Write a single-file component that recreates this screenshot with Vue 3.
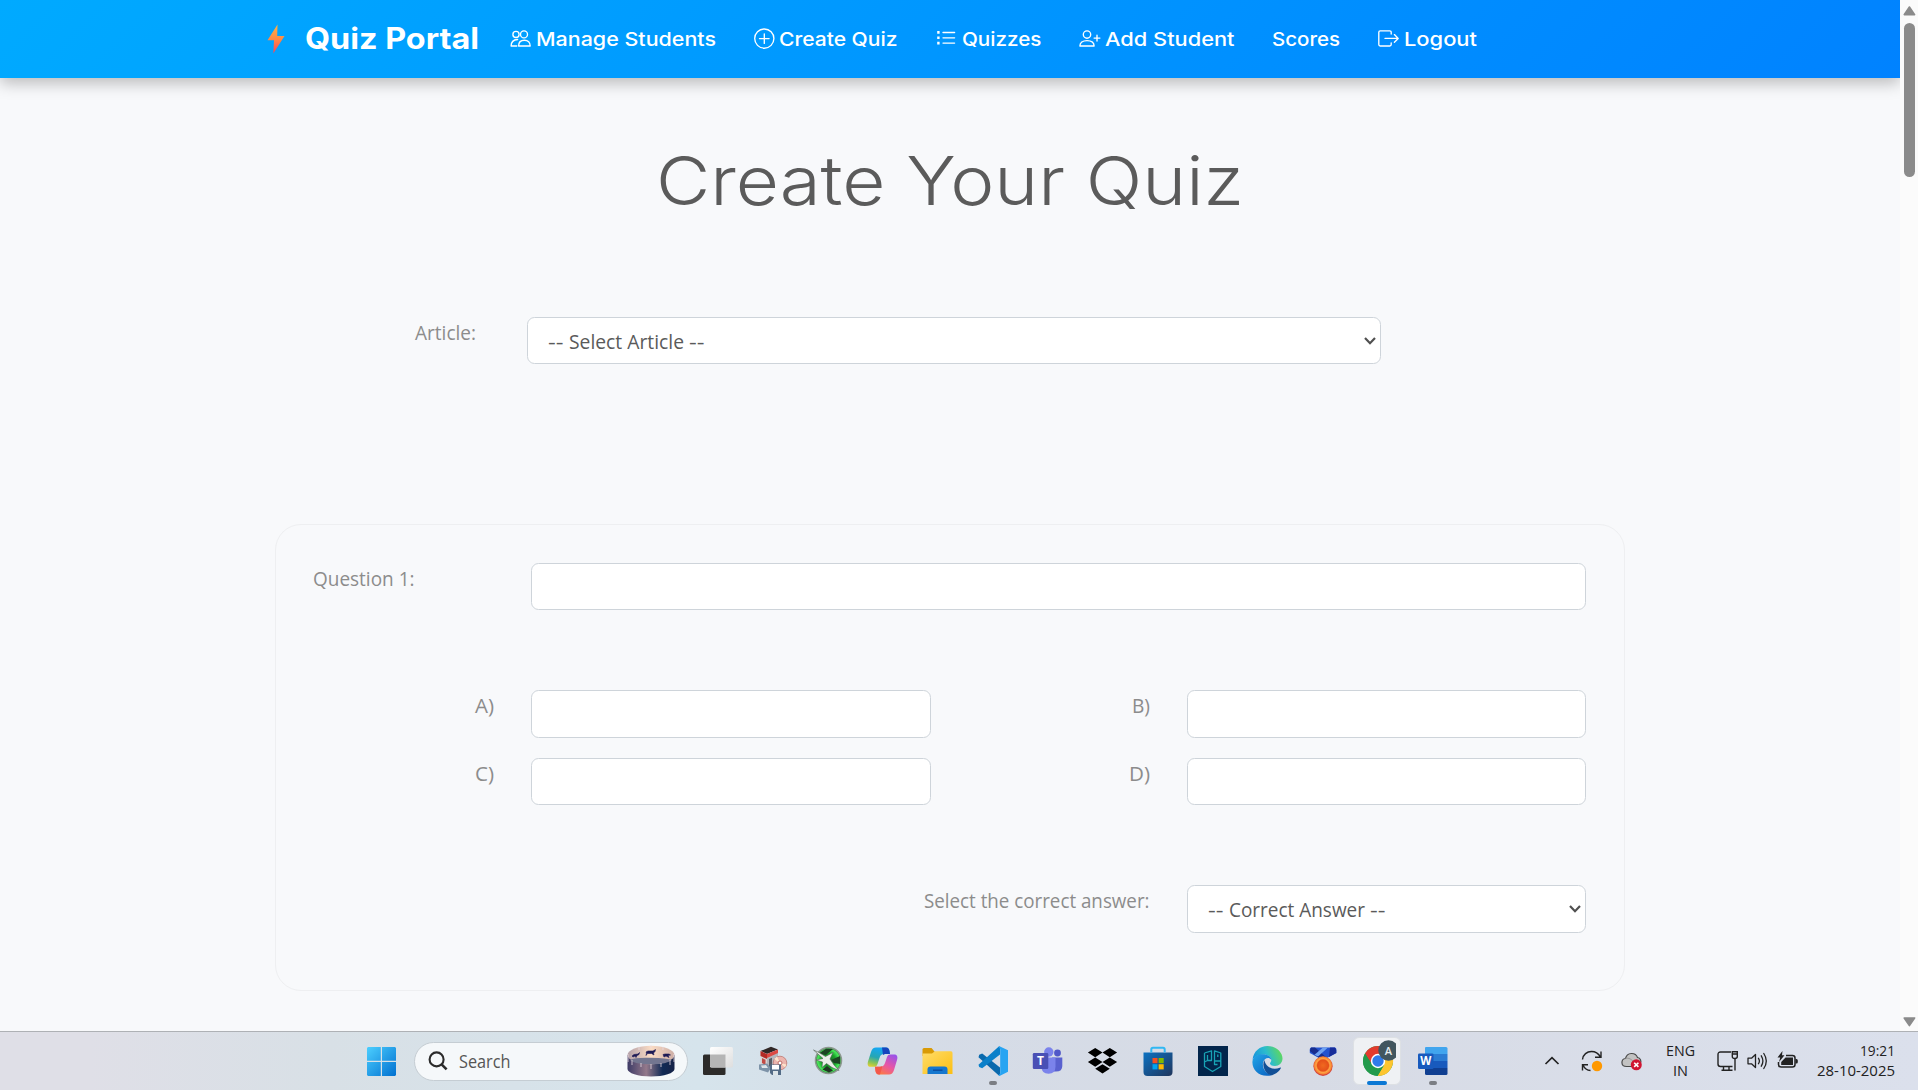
<script setup>
import { h } from 'vue'

// Single line of text fitted to a fixed width
const Txt = (props) =>
  h('svg', { width: props.w, height: props.h, 'aria-label': props.t, style: { display: 'block', flex: 'none', overflow: 'visible' } }, [
    h('text', { x: 0, y: props.b, textLength: props.w, lengthAdjust: 'spacingAndGlyphs', fill: 'currentColor' }, props.t)
  ])
Txt.props = ['t', 'w', 'h', 'b']

const links = [
  { t: 'Manage Students', w: 180, icon: 'people' },
  { t: 'Create Quiz', w: 118.5, icon: 'plus' },
  { t: 'Quizzes', w: 79.5, icon: 'list' },
  { t: 'Add Student', w: 129.5, icon: 'add' },
  { t: 'Scores', w: 68 },
  { t: 'Logout', w: 73, icon: 'exit' }
]
const options = [
  { t: 'A)', w: 19 }, { t: 'B)', w: 18 },
  { t: 'C)', w: 19 }, { t: 'D)', w: 21 }
]
</script>

<template>
  <div class="screen">
    <div class="viewport">
      <div class="page">
        <nav class="nav">
          <svg class="bolt" width="18" height="30" viewBox="0 0 18 30">
            <defs><linearGradient id="bolt" x1="0" y1="0" x2="0" y2="1"><stop offset="0" stop-color="#ffb347" /><stop offset=".5" stop-color="#ff8a45" /><stop offset="1" stop-color="#f9405a" /></linearGradient></defs>
            <path d="M10.5 0.5 0.5 16.2H7L6.3 29.5 17.5 12H10.2Z" fill="url(#bolt)" />
          </svg>
          <Txt class="brand" t="Quiz Portal" :w="174" :h="40" :b="30" />
          <div class="links">
            <div v-for="l in links" :key="l.t" class="link">
              <svg v-if="l.icon" class="ico" :class="l.icon" width="22" height="22" viewBox="0 0 22 22" fill="none" stroke="#fff" stroke-width="1.35" stroke-linejoin="round" stroke-linecap="round">
                <g v-if="l.icon === 'people'">
                  <circle cx="6" cy="6.4" r="3.1" /><circle cx="14" cy="6.4" r="3.5" />
                  <path d="M6.8 18H1.1C1.1 14.2 3 11.8 7.6 11.5M8.6 18H20.2C20.2 14.6 18 12.2 14.4 12.2S8.6 14.6 8.6 18Z" />
                </g>
                <g v-else-if="l.icon === 'plus'"><circle cx="10.3" cy="10.6" r="9.6" /><path d="M10.3 5.8V15.4M5.5 10.6H15.1" /></g>
                <g v-else-if="l.icon === 'list'">
                  <path d="M7 4.5H18.6M7 9.8H18.6M7 15.1H18.6" />
                  <path d="M1.2 3.1H3.6V5.7H1.2ZM1.2 8.5H3.6V11.1H1.2ZM1.2 13.8H3.6V16.4H1.2Z" fill="#fff" stroke="none" />
                </g>
                <g v-else-if="l.icon === 'add'"><circle cx="8" cy="6.5" r="3.7" /><path d="M.9 18C.9 14.6 3.6 12.6 8 12.6S15.1 14.6 15.1 18ZM18 7.2V13M15.1 10.1H20.9" /></g>
                <g v-else><path d="M13.2 6V4.2C13.2 3.3 12.7 2.8 11.8 2.8H2.2C1.3 2.8.8 3.3.8 4.2V16.6C.8 17.5 1.3 18 2.2 18H11.8C12.7 18 13.2 17.5 13.2 16.6V14.8M7 10.4H20.2M16.4 6.6 20.2 10.4 16.4 14.2" /></g>
              </svg>
              <Txt class="linktext" :t="l.t" :w="l.w" :h="40" :b="27" />
            </div>
          </div>
        </nav>

        <h1 class="title"><Txt t="Create Your Quiz" :w="588" :h="100" :b="75" /></h1>

        <div class="article">
          <Txt class="label" t="Article:" :w="61" :h="47" :b="23" />
          <div class="field">
            <div class="choice">
              <Txt t="--" :w="15.5" :h="45" :b="31" /><Txt t="Select Article" :w="115" :h="45" :b="31" /><Txt t="--" :w="15.5" :h="45" :b="31" />
            </div>
            <svg class="chev" width="14" height="10" viewBox="0 0 14 10"><path d="M2 2 7 7.2 12 2" fill="none" stroke="#505050" stroke-width="2.2" /></svg>
          </div>
        </div>

        <section class="card">
          <div class="row first">
            <Txt class="label" t="Question 1:" :w="101.5" :h="47" :b="23" />
            <div class="field"></div>
          </div>
          <div class="row opts">
            <template v-for="o in options" :key="o.t">
              <div class="tag"><Txt class="label" :t="o.t" :w="o.w" :h="47" :b="23" /></div>
              <div class="field"></div>
            </template>
          </div>
          <div class="row">
            <div class="tag wide"><Txt class="label" t="Select the correct answer:" :w="225.5" :h="47" :b="23" /></div>
            <div class="field">
              <div class="choice">
                <Txt t="--" :w="15.5" :h="46" :b="31" /><Txt t="Correct Answer" :w="136" :h="46" :b="31" /><Txt t="--" :w="15.5" :h="46" :b="31" />
              </div>
              <svg class="chev" width="14" height="10" viewBox="0 0 14 10"><path d="M2 2 7 7.2 12 2" fill="none" stroke="#505050" stroke-width="2.2" /></svg>
            </div>
          </div>
        </section>
      </div>
      <div class="scrollbar">
        <svg width="18" height="23" viewBox="0 0 18 23"><path d="M9.4 7 14.6 14.6H4.2Z" fill="#8b8b8b" stroke="#8b8b8b" stroke-width="1.6" stroke-linejoin="round" /></svg>
        <div class="thumb"></div>
        <svg class="down" width="18" height="23" viewBox="0 0 18 23"><path d="M9.4 17.6 14.6 10H4.2Z" fill="#8b8b8b" stroke="#8b8b8b" stroke-width="1.6" stroke-linejoin="round" /></svg>
      </div>
    </div>

    <footer class="taskbar">
      <svg class="win" width="29" height="29" viewBox="0 0 29 29">
        <defs><linearGradient id="win" x1="0" y1="0" x2="1" y2="1"><stop offset="0" stop-color="#4ccfff" /><stop offset="1" stop-color="#0070d0" /></linearGradient></defs>
        <path d="M1 0H13.8V13.8H0V1ZM15 0H28L29 1V13.8H15ZM0 15H13.8V29H1L0 28ZM15 15H29V28L28 29H15Z" fill="url(#win)" />
      </svg>
      <div class="search">
        <svg width="20" height="20" viewBox="0 0 20 20" fill="none" stroke="#2b2b2b" stroke-width="2.1"><circle cx="8.6" cy="8.4" r="7" /><path d="M13.6 13.4 18.6 18.4" stroke-width="2.6" /></svg>
        <Txt class="searchtext" t="Search" :w="51.5" :h="38" :b="26" />
        <svg class="drum" width="48" height="32" viewBox="0 0 48 32">
          <defs>
            <linearGradient id="dr1"><stop offset="0" stop-color="#3d3b66" /><stop offset=".4" stop-color="#94798b" /><stop offset=".75" stop-color="#102a55" /><stop offset="1" stop-color="#172347" /></linearGradient>
            <linearGradient id="dr2"><stop offset="0" stop-color="#b3a0a8" /><stop offset=".5" stop-color="#fbdcc4" /><stop offset="1" stop-color="#cdaea6" /></linearGradient>
          </defs>
          <path d="M.5 10V24C.5 28 11 31.5 24 31.5S47.5 28 47.5 24V10Z" fill="url(#dr1)" />
          <ellipse cx="24" cy="10" rx="23.5" ry="9.3" fill="url(#dr2)" />
          <path d="M3 15Q8 12.2 24 12.8T45 15Q40 19.2 24 19.3T3 15Z" fill="#737690" />
          <path d="M5 11 7 9.5 11 9 12.5 7.5 12 9.5 10 10.5 9 12.5 8 11 6 12ZM19 7 21 6 26 6 28.5 4.5 28 6.5 26.5 8 27 10 24.5 8.5 20.5 8.5 19 10.5 19.5 8ZM36 9.5 38 9 42 9 43.5 10 41 10.5 42 12.5 39 11 37 12Z" fill="#1c1a55" stroke="#1c1a55" stroke-width=".6" />
          <path d="M1 9V17M5 15V20M14 18V22M24 19V24M34 18V22M43 15V20M12 1.8V5M24 .5V3M36 1.8V5M47 9V17" stroke="#e9dbe2" stroke-width=".8" />
        </svg>
      </div>
      <div class="apps">
        <div class="app"><svg width="31" height="30" viewBox="0 0 31 30">
          <defs><linearGradient id="tv" x2="1" y2="1"><stop offset="0" stop-color="#fff" /><stop offset="1" stop-color="#dedede" /></linearGradient></defs>
          <rect x="1" y="8.5" width="22.5" height="20.5" rx="1.5" fill="#2c2b2a" /><rect x="8" y="1" width="23" height="20.5" rx="1.5" fill="url(#tv)" /><path d="M8 8.5H23.5V21.5H9.5L8 20Z" fill="#b5b5b5" />
        </svg></div>
        <div class="app"><svg width="30" height="30" viewBox="0 0 30 30">
          <path d="M2.5 5 13 .8 20 3.5 9 8Z" fill="#302726" /><path d="M9 8 20 3.5V17L9 22.5Z" fill="#b4b7bd" /><path d="M2.5 5 9 8V22.5L2.5 19Z" fill="#d8d3d3" /><path d="M2.5 5 9 8V13L2.5 10Z" fill="#b32a26" /><path d="M9 8 20 3.5V7L9 12Z" fill="#dc4a43" /><path d="M4 12 7.5 13.8V19L4 17Z" fill="#c24a44" /><path d="M11 13 14 11.8V20L11 21.5Z" fill="#5a5d66" /><path d="M1 18.5 9 17.5 13 22 10 26.5 1 23.5Z" fill="#7d93a8" /><path d="M3 19.5 8 19 10 22 4 22Z" fill="#dfe6ea" />
          <circle cx="22" cy="17" r="6.8" fill="#ecb5ae" stroke="#bd7771" stroke-width=".8" /><path d="M22 17 16 13 19 10.5ZM22 17 28.5 18.5 27 21.5Z" fill="#fce3cc" /><circle cx="22" cy="17" r="2" fill="#fff" stroke="#c06c65" />
          <path d="M12 18.5H23V29H14L12 27Z" fill="#536b86" /><path d="M14 19H21V23.5H14Z" fill="#fff" /><path d="M15 25H20V29H15Z" fill="#dce4e8" />
        </svg></div>
        <div class="app"><svg width="32" height="30" viewBox="0 0 32 30">
          <defs><radialGradient id="gr"><stop offset="0" stop-color="#1d5a28" /><stop offset=".55" stop-color="#18a329" /><stop offset=".85" stop-color="#4be85c" /><stop offset="1" stop-color="#2c6a35" /></radialGradient></defs>
          <circle cx="16.5" cy="14.5" r="13" fill="url(#gr)" stroke="#8b988e" stroke-width="1.5" /><path d="M6 8 14 2.8 21 3 14 9ZM19 14 28 10V18L22 17Z" fill="#1d4423" />
          <path d="M1.5 4 7 6.5 13.5 10.5 21 6.5 18 13 22 19 27 24.5 20 21.5 14.5 17.5 10 21.5 10.5 16 4 14 11 12.5Z" fill="#e9eee8" stroke="#516052" stroke-width=".6" />
          <path d="M10.5 23.5 15 20 21 24.5 17 26.5Z" fill="#223624" />
        </svg></div>
        <div class="app"><svg width="31" height="30" viewBox="0 0 31 30">
          <defs>
            <linearGradient id="cp1" x1=".3" y1="0" x2="0" y2="1"><stop offset="0" stop-color="#16a7f0" /><stop offset=".45" stop-color="#26a6b2" /><stop offset=".75" stop-color="#8dc455" /><stop offset="1" stop-color="#f5d22a" /></linearGradient>
            <linearGradient id="cp2" x1=".8" y1="0" x2=".2" y2="1"><stop offset="0" stop-color="#9a52e8" /><stop offset=".5" stop-color="#e755a6" /><stop offset="1" stop-color="#ff7d3c" /></linearGradient>
          </defs>
          <path d="M9 1.5H19C21.3 1.5 22 3 22.5 5L23 8H17C14.5 8 13.5 9 12.5 12L10.5 18C9.8 20 9 20.8 7 20.8H3.5C.8 20.8.2 18.5 1 15.5L4 6C5 2.8 6.5 1.5 9 1.5Z" fill="url(#cp1)" />
          <path d="M15 1.5H19C21.3 1.5 22 3 22.5 5L23 8H18L16 9Z" fill="#1645bd" />
          <path d="M22 28.5H12C9.7 28.5 9 27 8.5 25L8 20.8H13C15.5 20.8 17 20 18 17L20 11C20.7 9.3 21.5 8.5 23.5 8.5H27C30 8.5 31 10.5 30 14L27 24C26 27.2 24.5 28.5 22 28.5Z" fill="url(#cp2)" />
          <path d="M8 20.8H13L15.5 20 13 28.5H12C9.7 28.5 9 27 8.5 25Z" fill="#f3584b" />
        </svg></div>
        <div class="app"><svg width="31" height="30" viewBox="0 0 31 30">
          <defs><linearGradient id="fo" x2="1" y2="1"><stop offset="0" stop-color="#ffdc6a" /><stop offset="1" stop-color="#fcbf12" /></linearGradient></defs>
          <path d="M.5 10V3.5Q.5 2 2 2H9.5L12.5 5.5V10Z" fill="#d99a05" /><path d="M.5 7.5H10L13 5.3H29Q30.5 5.3 30.5 7V28H.5Z" fill="url(#fo)" /><path d="M5.500 28V23.5Q5.500 20.5 8.5 20.5H22.5Q25.5 20.5 25.5 23.5V28Z" fill="#1577cf" /><path d="M11 24.2H20.5" stroke="#0b4da0" stroke-width="1.5" />
        </svg></div>
        <div class="app run"><svg width="30" height="30" viewBox="0 0 30 30">
          <path d="M1.2 8.800 4.2 7.5 22 21.5V29.5L20.5 29.3.5 11.2Z" fill="#0a69ad" /><path d="M1.2 21 4.2 22.3 22 8.5V.5L20.5.7.5 18.700Z" fill="#0b80ca" /><path d="M21.5.2 30 4.2V25.8L21.5 29.9 20.5 29.3 22.2 27.5V3L20.5.8Z" fill="#27a4f2" />
        </svg></div>
        <div class="app"><svg width="31" height="30" viewBox="0 0 31 30">
          <circle cx="25.5" cy="7" r="3.4" fill="#5058c8" /><circle cx="16.8" cy="6" r="4.7" fill="#7b83eb" /><path d="M20 11.5H30.3V20Q30.3 25.5 24 25.5H20Z" fill="#5961cf" /><path d="M9.5 11.5H23.5V20.5Q23.5 27.7 16.5 27.7T9.5 20.5Z" fill="#7b83eb" /><rect x=".8" y="7" width="15.5" height="16" rx="1.3" fill="#4a50b5" /><text x="8.5" y="19.2" text-anchor="middle" font-size="12" font-weight="700" fill="#fff">T</text>
        </svg></div>
        <div class="app"><svg width="31" height="30" viewBox="0 0 31 30"><path d="M8.2 2 15.5 6.6 8.2 11.2.9 6.6ZM22.8 2 30.1 6.6 22.8 11.2 15.5 6.6ZM8.2 11.5 15.5 16.1 8.2 20.7.9 16.1ZM22.8 11.5 30.1 16.1 22.8 20.7 15.5 16.1ZM15.5 18.2 22.8 22.8 15.5 27.4 8.2 22.8Z" fill="#000" /></svg></div>
        <div class="app"><svg width="30" height="30" viewBox="0 0 30 30">
          <defs><linearGradient id="st" x2="1" y2="1"><stop offset="0" stop-color="#0c72c2" /><stop offset="1" stop-color="#20355c" /></linearGradient></defs>
          <path d="M.5 6.5H29.5V26Q29.5 30 25.5 30H4.5Q.5 30 .5 26Z" fill="url(#st)" /><path d="M8.3 6.5V3.5Q8.3 1.8 10 1.8H20Q21.7 1.8 21.7 3.5V6.5" fill="none" stroke="#31b8f3" stroke-width="2" /><path d="M9.5 12H14.5V17.2H9.5Z" fill="#f25022" /><path d="M15.6 12H20.7V17.2H15.6Z" fill="#7fba00" /><path d="M9.5 18.2H14.5V23.4H9.5Z" fill="#00a4ef" /><path d="M15.6 18.2H20.7V23.4H15.6Z" fill="#ffb900" />
        </svg></div>
        <div class="app"><svg width="30" height="30" viewBox="0 0 30 30">
          <rect width="30" height="30" fill="#02254b" /><g fill="none" stroke="#18a3b5" stroke-width="1.3" stroke-linejoin="round"><path d="M6.5 7 13.5 4.8V14.5H9.5V9M6.5 7V20.5L14.5 25.5 22.8 20.5V15H16.5V4.8L22.8 7V14.5M19.8 11V8.5M9.5 14.5 6.5 16M16.5 15V18.5H19.5" /></g>
        </svg></div>
        <div class="app"><svg width="31" height="30" viewBox="0 0 31 30">
          <defs>
            <linearGradient id="ed1" x1="0" y1=".6" x2="1" y2=".3"><stop offset="0" stop-color="#1691dd" /><stop offset=".5" stop-color="#2bbccd" /><stop offset="1" stop-color="#63da55" /></linearGradient>
            <linearGradient id="ed2" x1="0" y1="0" x2=".8" y2="1"><stop offset="0" stop-color="#22a7e8" /><stop offset="1" stop-color="#0b65c3" /></linearGradient>
          </defs>
          <path d="M.5 14C1.5 5 8 0 15.5 0 24 0 30.5 6 30.5 12.5 30.5 17 27 20 23 20 19.5 20 18 18.5 18 17.5 18 16.5 19.3 16 19.3 14 19.3 11 16 8.5 11.5 8.5 6 8.5 1.5 11.5.5 14Z" fill="url(#ed1)" />
          <path d="M.5 15C1 11 5 8.3 10.5 8.3 16 8.3 19.3 11 19.3 14 17 10.5 12 12 11 17 10 23 15 28.5 20.5 29 8 32.5-.5 24 .5 15Z" fill="url(#ed2)" />
          <path d="M12.5 14C9 20 14 29 20 29.2 24.5 27.8 28 24.5 28.8 22.3 29 21.5 28.5 21.3 27.8 21.7 20 25 13 20 12.5 14Z" fill="#124f96" />
        </svg></div>
        <div class="app"><svg width="28" height="30" viewBox="0 0 28 30">
          <defs><radialGradient id="me"><stop offset="0" stop-color="#f06a20" /><stop offset=".6" stop-color="#e5501a" /><stop offset=".75" stop-color="#ffa544" /><stop offset="1" stop-color="#f0742f" /></radialGradient></defs>
          <path d="M.8 3Q.8 1.5 2.5 1.5H25.5Q27.3 1.5 27.3 3V7L18 12H10L.8 7Z" fill="#2453cf" /><path d="M.8 5 10 12H18L6 1.5H2Z" fill="#182d8e" /><path d="M14 1.5H19L9 10.5 5.5 8.8Z" fill="#6fa2f2" /><path d="M21 1.5H26L27.3 4V7L20 11Z" fill="#182d99" /><circle cx="14" cy="20.3" r="9.6" fill="#d5433b" /><circle cx="14" cy="19.5" r="9.2" fill="url(#me)" />
        </svg></div>
        <div class="app active"><svg width="36" height="38" viewBox="0 0 36 38">
          <circle cx="18" cy="22" r="15" fill="#229a4b" /><path d="M5 14.5A15 15 0 0 1 31 14.5L18 15 12 25Z" fill="#e33b2e" /><path d="M31 14.5A15 15 0 0 1 17.5 37L24 26 22 14.5Z" fill="#fdc52e" /><path d="M5 14.5 11.7 26 18 29 24 26 17.5 37A15 15 0 0 1 5 14.5Z" fill="#229a4b" /><circle cx="18" cy="22" r="7.2" fill="#fff" /><circle cx="18" cy="22" r="5.7" fill="#2f7bea" />
          <circle cx="28.5" cy="11.5" r="10.2" fill="#42565f" /><text x="28.5" y="15.5" text-anchor="middle" font-size="11" font-weight="600" fill="#e6edef">A</text>
        </svg></div>
        <div class="app run"><svg width="30" height="30" viewBox="0 0 30 30">
          <path d="M8 1H28Q29.5 1 29.5 2.5V8H7V2Q7 1 8 1Z" fill="#41a5ee" /><path d="M7 8H29.5V15H7Z" fill="#2b7cd3" /><path d="M7 15H29.5V22H7Z" fill="#185abd" /><path d="M7 22H29.5V27.5Q29.5 29 28 29H8.5Q7 29 7 27.5Z" fill="#103f91" /><rect y="7.5" width="15.5" height="15.5" rx="1.3" fill="#185abd" /><text x="7.8" y="19.3" text-anchor="middle" font-size="11.5" font-weight="700" fill="#fff">W</text>
        </svg></div>
      </div>
      <div class="tray">
        <svg class="t1" width="16" height="10" viewBox="0 0 16 10"><path d="M1.5 8 8 1.7 14.5 8" fill="none" stroke="#222" stroke-width="1.7" /></svg>
        <svg class="t2" width="22" height="22" viewBox="0 0 22 22" fill="none" stroke="#222" stroke-width="1.4"><path d="M1.5 9.5C2 4.5 6 1.5 10.5 1.5 14 1.5 17.5 3.5 19.5 7M20 1.5V7.2H14M1.5 20.5V14.8H7M2 15C3.5 18.5 6 20.3 9.5 20.5" /><circle cx="16" cy="16" r="5.2" fill="#ff9800" stroke="none" /></svg>
        <svg class="t3" width="22" height="20" viewBox="0 0 22 20"><path d="M5.5 15.5C-.5 15.5-.3 8 4.5 7.5 6 1 14.5 1 16.5 6.5 19.5 7 20.5 10 19.5 12L14 15.5Z" fill="#c2c2c2" stroke="#4a4a4a" stroke-width="1.2" /><path d="M4.5 7.5C8 6.5 10 8 14 12" fill="none" stroke="#999" /><circle cx="15.3" cy="13.8" r="5.5" fill="#d01531" /><path d="M13.2 11.7 17.4 15.9M17.4 11.7 13.2 15.9" stroke="#fff" stroke-width="1.6" /></svg>
        <div class="lang"><Txt t="ENG" :w="29" :h="20" :b="15" /><Txt t="IN" :w="15" :h="20" :b="15" /></div>
        <svg class="t4" width="22" height="22" viewBox="0 0 22 22" fill="none" stroke="#222" stroke-width="1.4"><path d="M14 2H3.5Q1 2 1 4.5V14Q1 16.5 3.5 16.5H15.5M6.5 17V20M12 17V20M4.5 20.2H15.5M18 8.5V20.5" /><path d="M15.3 1.7H20.3V6.5Q20.3 8.5 17.8 8.5T15.3 6.5ZM15.3 4H20.3" /></svg>
        <svg class="t5" width="21" height="20" viewBox="0 0 21 20" fill="none" stroke="#222" stroke-width="1.3" stroke-linejoin="round" stroke-linecap="round"><path d="M1 7.2H4.5L8.5 3.5V16.5L4.5 12.8H1ZM11.5 7.3Q13.3 10 11.5 12.7M14.3 4.8Q17.5 10 14.3 15.2M16.8 2.5Q21.8 10 16.8 17.5" /></svg>
        <svg class="t6" width="22" height="20" viewBox="0 0 22 20"><path d="M9 4.5H15.5Q18 4.5 18 7V13.5Q18 16 15.5 16H4Q1.5 16 1.5 13.5V11" fill="none" stroke="#222" stroke-width="1.5" /><path d="M18.5 8H19.5Q20.8 8 20.8 9.5V11Q20.8 12.5 19.5 12.5H18.5ZM8.5 6.5H16V14H4.2V11Z" fill="#222" /><path d="M5.5 0 .5 6.5H3.2L2 11 7.5 4.3H5Z" fill="#222" /></svg>
        <div class="clock"><Txt t="19:21" :w="35" :h="20" :b="15" /><Txt t="28-10-2025" :w="78" :h="20" :b="15" /></div>
      </div>
    </footer>
  </div>
</template>

<style>
body { margin: 0; overflow: hidden; }
</style>

<style scoped>
.screen { width: 1918px; height: 1090px; display: flex; flex-direction: column; overflow: hidden; font-family: "Open Sans", "Noto Sans", sans-serif; font-size: 19.6px; background: #f8f9fb; }
.viewport { display: flex; height: 1031px; flex: none; }
.page { width: 1900px; background: #f8f9fb; overflow: hidden; }
.nav { height: 78px; display: flex; align-items: center; padding-left: 267px; background: linear-gradient(135deg, #00aaff, #0082ff); box-shadow: 0 5px 15px rgba(0, 0, 0, .26); color: #fff; font-family: Inter, "Open Sans", sans-serif; }
.brand { margin-left: 20px; font-size: 29.3px; font-weight: 700; }
.links { display: flex; gap: 38px; margin-left: 31px; }
.link { display: flex; align-items: center; }
.ico { margin-right: 3.7px; }
.linktext { font-size: 19.2px; font-weight: 500; }
.title { margin: 52px 0 0; padding-left: 656px; font-family: Inter, "Open Sans", sans-serif; font-weight: 330; font-size: 67.5px; color: #5b5b5b; line-height: 1; }
.article { display: flex; margin: 87px 0 0 415px; height: 47px; }
.article .field { width: 854px; margin-left: 51px; }
.label { color: #8c8c8c; }
.choice { display: flex; gap: 5px; }
.field { box-sizing: border-box; display: flex; justify-content: space-between; align-items: center; border: 1px solid #ced4da; border-radius: 7.5px; background: #fff; color: #5a5a5a; padding: 0 3px 0 20px; }
.card { box-sizing: border-box; width: 1350px; height: 467px; margin: 160px 0 0 275px; padding: 38px 0 0 37px; border: 1px solid #eeeff1; border-radius: 26px; display: flex; flex-direction: column; gap: 80px; }
.row { display: grid; grid-template-columns: 218px 400px 256px 399px; }
.first { height: 47px; }
.first .field { grid-column: 2 / 5; }
.opts { grid-template-rows: 48px 47px; row-gap: 20px; }
.row:last-child { height: 48px; }
.tag { display: flex; justify-content: flex-end; padding-right: 37.5px; }
.wide { grid-column: 1 / 4; }
.scrollbar { width: 18px; background: #fbfbfb; display: flex; flex-direction: column; }
.thumb { width: 11px; height: 154px; margin-left: 4px; border-radius: 6px; background: #8b8b8b; }
.down { margin-top: auto; }
.taskbar { box-sizing: border-box; height: 59px; border-top: 1px solid #aeb1b5; display: flex; align-items: center; background: linear-gradient(90deg, #dfdfe7 0, #dfdfe7 90px, #d8e0e6 330px, #d6e4ec 700px, #d5dce7 900px, #d7dbe5 1300px, #dbe0ec 1918px); }
.win { margin-left: 367px; }
.search { box-sizing: border-box; width: 274px; height: 39px; margin-left: 17.5px; border: 1px solid #c5cdd3; border-radius: 20px; background: #f5f8fa; display: flex; align-items: center; padding-left: 13px; }
.searchtext { margin-left: 11px; font-size: 18px; color: #555; }
.drum { margin-left: 117px; }
.apps { display: flex; margin-left: 2.5px; }
.app { position: relative; width: 55px; height: 58px; display: flex; align-items: center; justify-content: center; }
.app svg { position: relative; z-index: 1; }
.run::after { content: ""; position: absolute; left: 24px; bottom: 5px; width: 8px; height: 4px; border-radius: 2px; background: #7b7e84; }
.active::before { content: ""; position: absolute; left: 3px; top: 5px; width: 48px; height: 48px; box-sizing: border-box; border: 1px solid #dde0e4; border-radius: 6px; background: #eff1f4; }
.active svg { top: -3.5px; }
.active::after { content: ""; position: absolute; left: 17px; bottom: 5px; width: 20px; height: 4px; border-radius: 2px; background: #0b78d4; z-index: 2; }
.tray { display: flex; align-items: center; margin-left: 84px; font-size: 15.2px; color: #222; }
.t2 { margin-left: 21px; }
.t3 { margin-left: 18px; }
.lang { width: 29px; margin-left: 22.5px; display: flex; flex-direction: column; align-items: center; }
.t4 { margin-left: 22px; }
.t5 { margin-left: 8.5px; }
.t6 { margin-left: 8.5px; }
.clock { width: 78px; margin-left: 18px; display: flex; flex-direction: column; align-items: flex-end; }
</style>
